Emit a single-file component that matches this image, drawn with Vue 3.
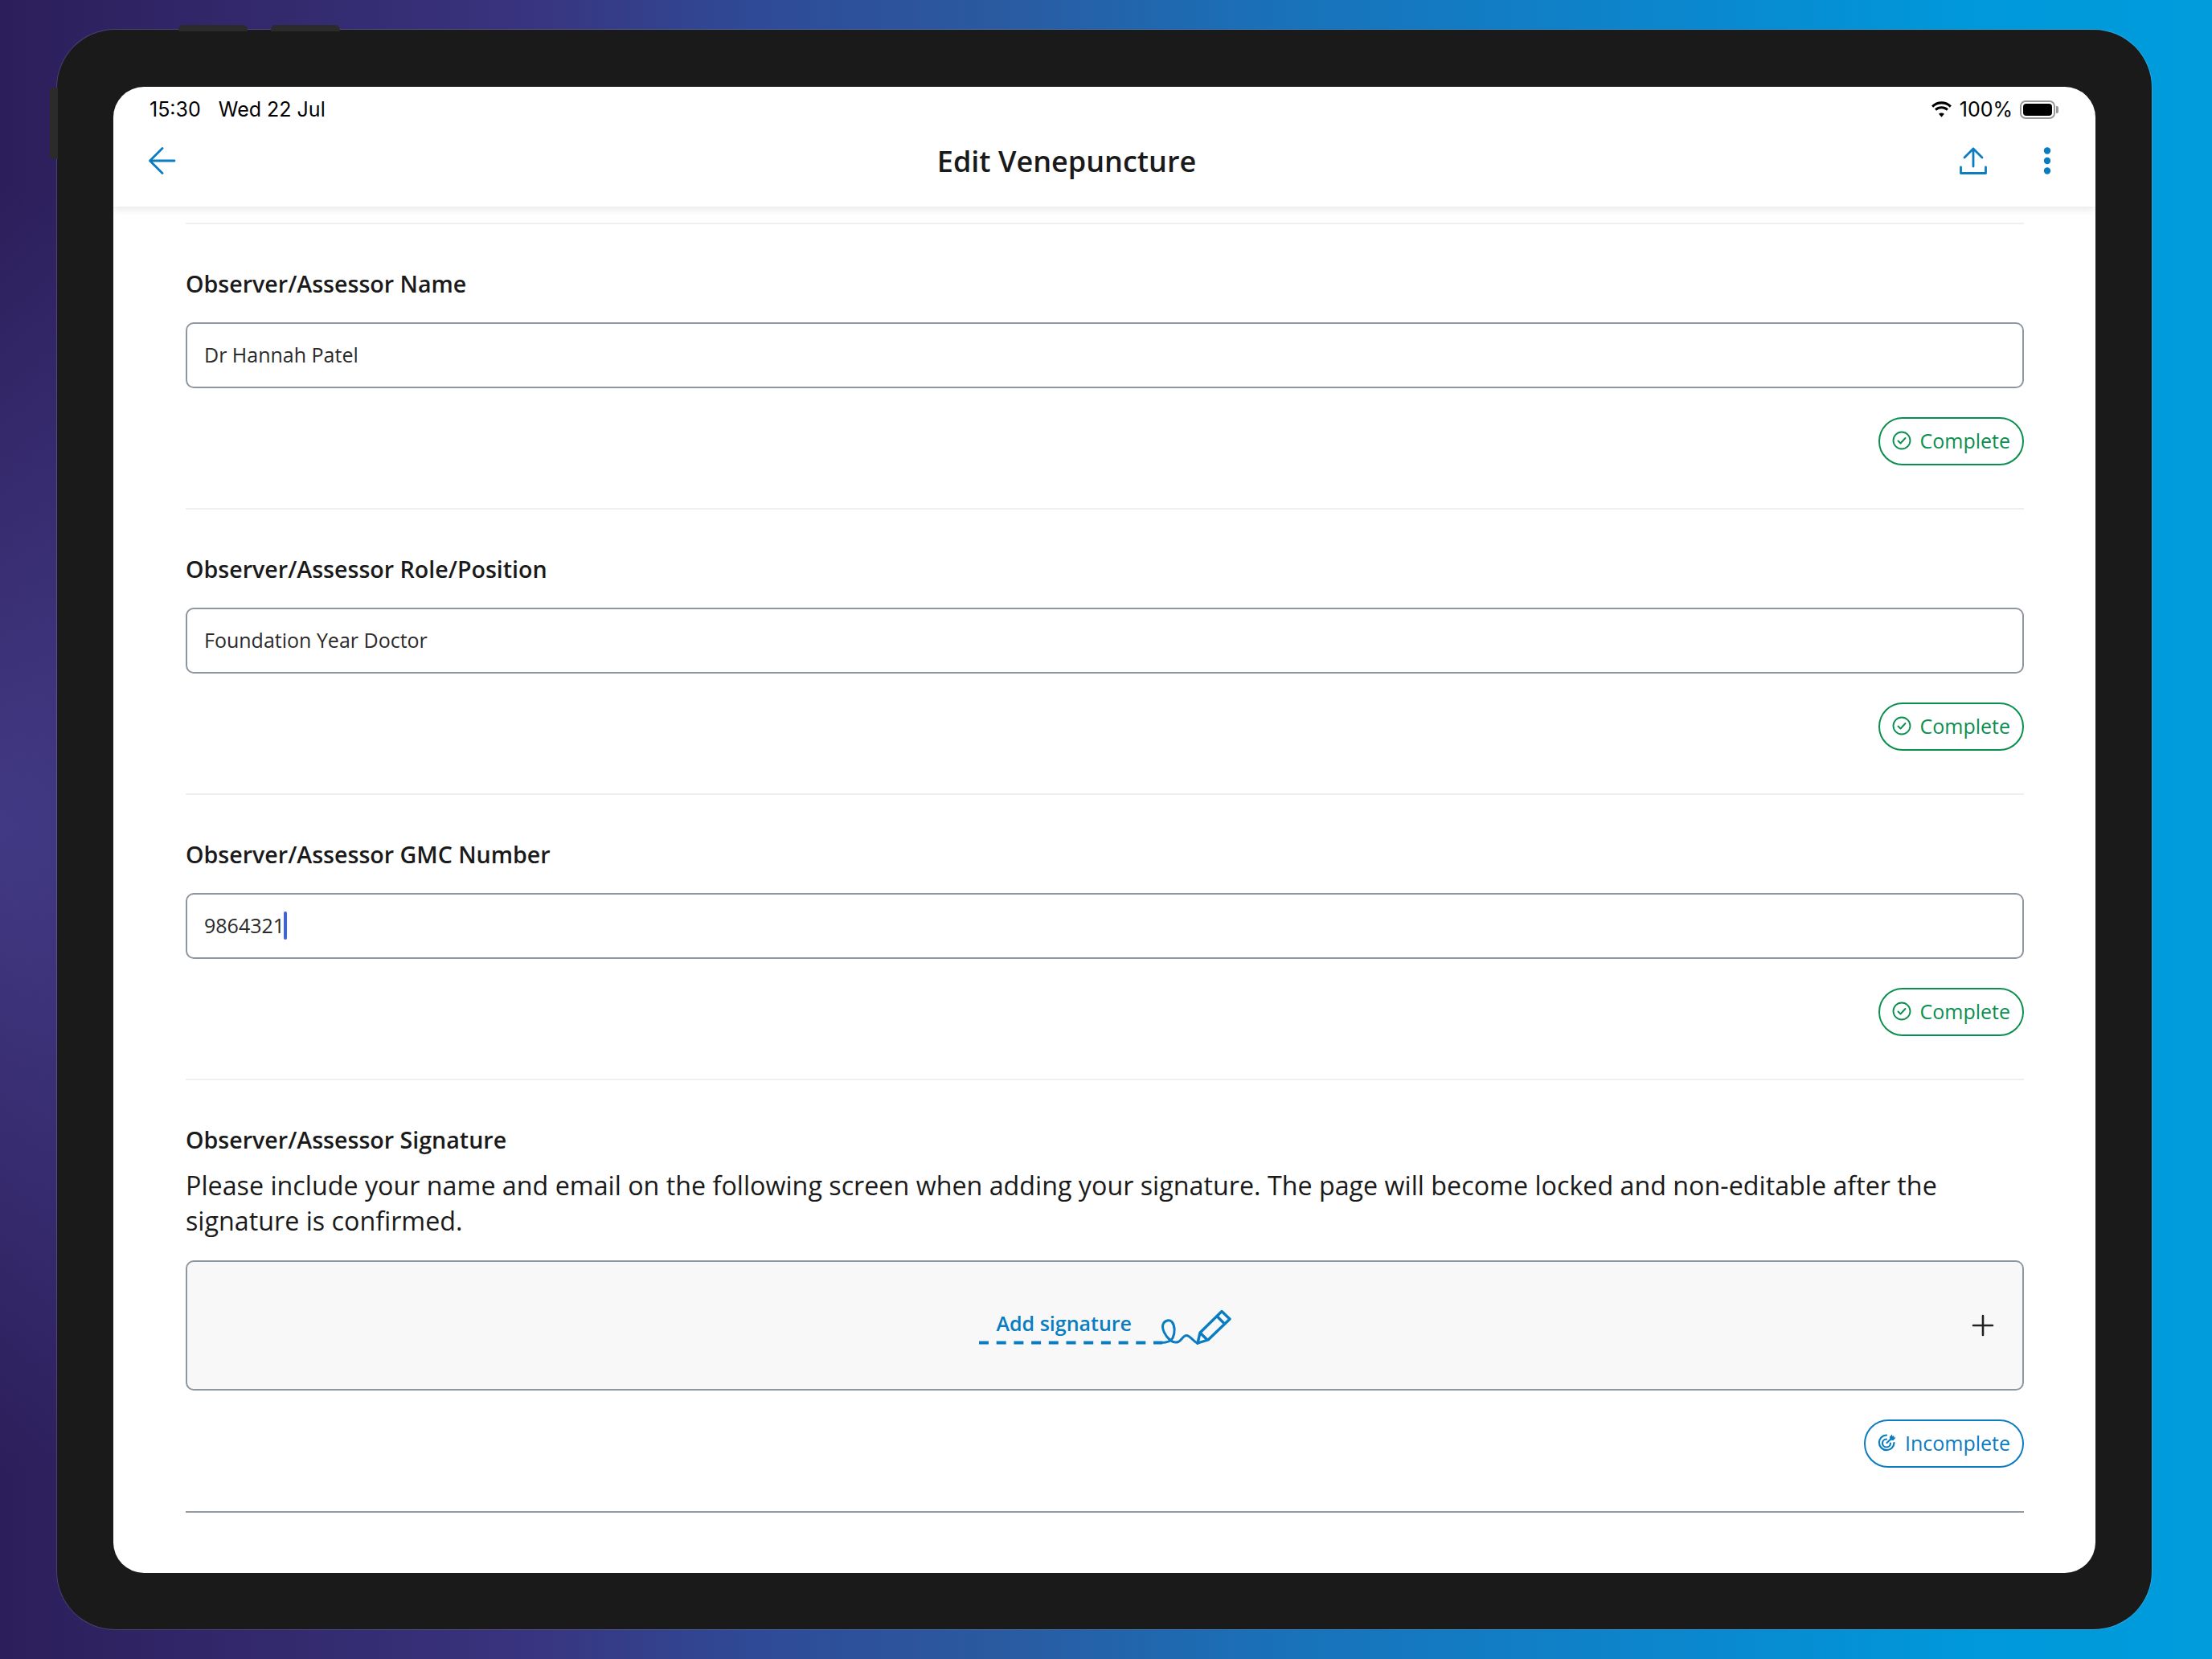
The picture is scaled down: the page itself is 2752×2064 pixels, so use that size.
<template>
  <div class="page">
    <div class="tablet">
      <span class="hw-btn top-a"></span>
      <span class="hw-btn top-b"></span>
      <span class="hw-btn side"></span>

      <div class="screen">
        <header class="app-header">
          <div class="status-bar">
            <div class="status-left">
              <span>15:30</span>
              <span>Wed 22 Jul</span>
            </div>
            <div class="status-right">
              <svg class="wifi" width="29" height="22" viewBox="0 0 26 20" fill="#000">
                <path d="M13 4.200c3.600 0 6.900 1.400 9.400 3.700l1.900-2.100A16.600 16.600 0 0 0 13 1.200 16.600 16.600 0 0 0 1.700 5.800l1.900 2.100A13.800 13.800 0 0 1 13 4.200z"/>
                <path d="M13 9.400c2.200 0 4.200.8 5.800 2.200l1.900-2.100a11.500 11.500 0 0 0-15.400 0l1.900 2.100A8.700 8.700 0 0 1 13 9.400z"/>
                <path d="M13 14c-1.200 0-2.300.5-3.100 1.200L13 18.800l3.100-3.600A4.600 4.600 0 0 0 13 14z"/>
              </svg>
              <span>100%</span>
              <span class="battery"><i></i></span>
            </div>
          </div>
          <div class="nav-bar">
            <button class="icon-btn back" title="Back">
              <svg width="34" height="34" viewBox="0 0 34 34" fill="none" stroke="#0a7cc1" stroke-width="2.800" stroke-linecap="round" stroke-linejoin="round">
                <path d="M32 17H2M17 1.500 1.500 17 17 32.500"/>
              </svg>
            </button>
            <h1>Edit Venepuncture</h1>
            <div class="nav-actions">
              <button class="icon-btn" title="Share">
                <svg width="34" height="34" viewBox="0 0 34 34" fill="none" stroke="#0a7cc1" stroke-width="2.800" stroke-linecap="round" stroke-linejoin="round">
                  <path d="M17 24V2M6 13 17 2l11 11M1.500 25v7.500h31V25"/>
                </svg>
              </button>
              <button class="icon-btn" title="More">
                <svg width="10" height="34" viewBox="0 0 10 34" fill="#0a7cc1">
                  <circle cx="5" cy="4.500" r="4.200"/>
                  <circle cx="5" cy="17" r="4.200"/>
                  <circle cx="5" cy="29.500" r="4.200"/>
                </svg>
              </button>
            </div>
          </div>
        </header>

        <main class="content">
          <section v-for="field in fields" :key="field.label" class="field">
            <label>{{ field.label }}</label>
            <div class="input">
              <span>{{ field.value }}</span><i v-if="field.caret" class="caret"></i>
            </div>
            <div class="pill-row">
              <div class="pill complete">
                <svg width="24" height="24" viewBox="0 0 24 24" fill="none" stroke="currentColor" stroke-width="1.900" stroke-linecap="round" stroke-linejoin="round">
                  <circle cx="12" cy="12" r="10.500"/>
                  <path d="m7.500 12.500 3 3 6-6.500"/>
                </svg>
                Complete
              </div>
            </div>
          </section>

          <section class="field signature">
            <label>Observer/Assessor Signature</label>
            <p>Please include your name and email on the following screen when adding your signature. The page will become locked and non-editable after the signature is confirmed.</p>
            <div class="sign-box">
              <div class="sign-link">
                <span>Add signature</span>
                <svg width="314" height="50" viewBox="0 0 314 50" fill="none" stroke="#0a7cc1" stroke-width="3">
                  <path d="M0 42.500h228" stroke-width="4" stroke-dasharray="12 9.700"/>
                  <path d="M226 42.500c7 0 13-1 15-6 3-6 3-15-1-20-3-3-9-2-11 3-2 6 3 15 9 20 4 3 7 3 10 2 4-2 6-8 10-8 5 0 7 6 14 10" stroke-linecap="round"/>
                  <path d="m272 43 3-13 27-26.500 10 9.500-27 26zM276 31l8 8M296 9.500l10 10" stroke-width="3.400" stroke-linejoin="round"/>
                </svg>
              </div>
              <svg class="plus" width="28" height="28" viewBox="0 0 28 28" stroke="#222" stroke-width="2.600" stroke-linecap="round">
                <path d="M14 2v24M2 14h24"/>
              </svg>
            </div>
            <div class="pill-row">
              <div class="pill incomplete">
                <svg width="24" height="24" viewBox="0 0 24 24" fill="none" stroke="currentColor" stroke-width="2.200" stroke-linecap="round">
                  <path d="M20.500 12a9.300 9.300 0 1 1-9.500-9.500"/>
                  <path d="M16 12.500a5 5 0 1 1-5-5"/>
                  <path d="m11.500 12 8-7.500"/>
                  <path d="m18 1.500.5 3.500 4 .5-3 3.500-4-.5-.5-4z" fill="currentColor" stroke="none"/>
                </svg>
                Incomplete
              </div>
            </div>
          </section>
          <div class="end-rule"></div>
        </main>
      </div>
    </div>
  </div>
</template>

<script setup>
const fields = [
  { label: 'Observer/Assessor Name', value: 'Dr Hannah Patel' },
  { label: 'Observer/Assessor Role/Position', value: 'Foundation Year Doctor' },
  { label: 'Observer/Assessor GMC Number', value: '9864321', caret: true }
]
</script>

<style>
html, body {
  margin: 0;
  padding: 0;
}
</style>

<style scoped>
.page {
  width: 2752px;
  height: 2064px;
  padding: 37px 75px 37px 71px;
  box-sizing: border-box;
  overflow: hidden;
  font-family: "Open Sans", "Noto Sans", sans-serif;
  background:
    radial-gradient(ellipse 620px 800px at 0 1030px, rgba(78, 72, 155, 0.65), rgba(78, 72, 155, 0) 100%),
    linear-gradient(90deg, #2c1e5a 0%, #39347f 24%, #2f4a96 34%, #2a5aa0 45%, #1a70b8 57%, #0a88cf 77%, #0098da 89%, #009cdc 100%);
}

.tablet {
  position: relative;
  height: 100%;
  padding: 71px 70px 70px 70px;
  box-sizing: border-box;
  background: #1a1a1a;
  border-radius: 72px;
  box-shadow: 0 0 0 1px rgba(255, 255, 255, 0.14);
}

.hw-btn {
  position: absolute;
  background: #2b2b2b;
  border-radius: 6px 6px 0 0;
}

.hw-btn.top-a {
  left: 151px;
  top: -6px;
  width: 86px;
  height: 8px;
}

.hw-btn.top-b {
  left: 266px;
  top: -6px;
  width: 86px;
  height: 8px;
}

.hw-btn.side {
  left: -9px;
  top: 72px;
  width: 10px;
  height: 89px;
  border-radius: 4px 0 0 4px;
}

.screen {
  height: 100%;
  background: #fff;
  border-radius: 38px;
  overflow: hidden;
}

.app-header {
  height: 149px;
  box-sizing: border-box;
  padding: 0 45px;
  box-shadow: 0 3px 10px rgba(0, 0, 0, 0.1);
  position: relative;
}

.status-bar {
  display: flex;
  justify-content: space-between;
  align-items: center;
  height: 56px;
  font-family: Inter, "Liberation Sans", sans-serif;
  font-size: 25px;
  color: #000;
}

.status-left {
  display: flex;
  gap: 22px;
}

.status-right {
  display: flex;
  align-items: center;
  gap: 8px;
  margin-right: 2px;
}

.battery {
  position: relative;
  width: 44px;
  height: 23px;
  box-sizing: border-box;
  border: 2px solid #999;
  border-radius: 7px;
  padding: 2px;
  margin-left: 1px;
  margin-right: 3px;
}

.battery i {
  display: block;
  height: 100%;
  background: #000;
  border-radius: 4px;
}

.battery::after {
  content: "";
  position: absolute;
  right: -6px;
  top: 5px;
  width: 3px;
  height: 9px;
  background: #999;
  border-radius: 0 2px 2px 0;
}

.nav-bar {
  position: relative;
  display: flex;
  align-items: center;
  justify-content: space-between;
  height: 60px;
  margin-top: 6px;
}

.nav-bar h1 {
  position: absolute;
  left: 0;
  right: 94px;
  margin: 0;
  text-align: center;
  font-size: 36px;
  font-weight: 600;
  color: #1a1a1a;
}

.icon-btn {
  display: flex;
  padding: 0;
  border: 0;
  background: none;
}

.icon-btn.back {
  margin-left: -1px;
}

.nav-actions {
  display: flex;
  align-items: center;
  gap: 70px;
  padding-right: 10px;
}

.content {
  padding: 20px 89px 0 90px;
}

.field {
  height: 355px;
  box-sizing: border-box;
  border-top: 2px solid #eeeff1;
  padding-top: 55px;
}

.field label {
  display: block;
  font-size: 28.6px;
  font-weight: 600;
  line-height: 38px;
  color: #1a1a1a;
}

.input {
  display: flex;
  align-items: center;
  height: 82px;
  margin-top: 29px;
  padding: 0 21px 2px;
  box-sizing: border-box;
  border: 2px solid #8e96a0;
  border-radius: 10px;
  font-size: 25px;
  color: #2a2a2a;
}

.caret {
  display: block;
  width: 4px;
  height: 35px;
  margin-left: -1px;
  background: #3f63e0;
  border-radius: 2px;
}

.pill-row {
  display: flex;
  justify-content: flex-end;
  margin-top: 36px;
}

.pill {
  display: flex;
  align-items: center;
  gap: 10px;
  height: 60px;
  padding: 0 15px 2px;
  box-sizing: border-box;
  border: 2px solid;
  border-radius: 30px;
  font-size: 25px;
}

.pill.complete {
  color: #0a8f4f;
}

.pill.incomplete {
  color: #0a7cc1;
}

.signature {
  height: auto;
}

.signature p {
  margin: 16px 0 0;
  font-size: 32.25px;
  line-height: 44px;
  color: #1a1a1a;
}

.sign-box {
  position: relative;
  display: flex;
  align-items: center;
  justify-content: center;
  height: 162px;
  margin-top: 27px;
  box-sizing: border-box;
  border: 2px solid #8e96a0;
  border-radius: 10px;
  background: #f8f8f8;
}

.sign-link {
  position: relative;
  width: 314px;
  height: 50px;
  margin-top: 7px;
  color: #0a7cc1;
  font-size: 25px;
  font-weight: 600;
}

.sign-link span {
  position: absolute;
  left: 22px;
  top: 1px;
}

.sign-link svg {
  display: block;
}

.plus {
  position: absolute;
  right: 35px;
  top: 65px;
}

.end-rule {
  height: 2px;
  margin-top: 54px;
  background: #939aa4;
}
</style>
